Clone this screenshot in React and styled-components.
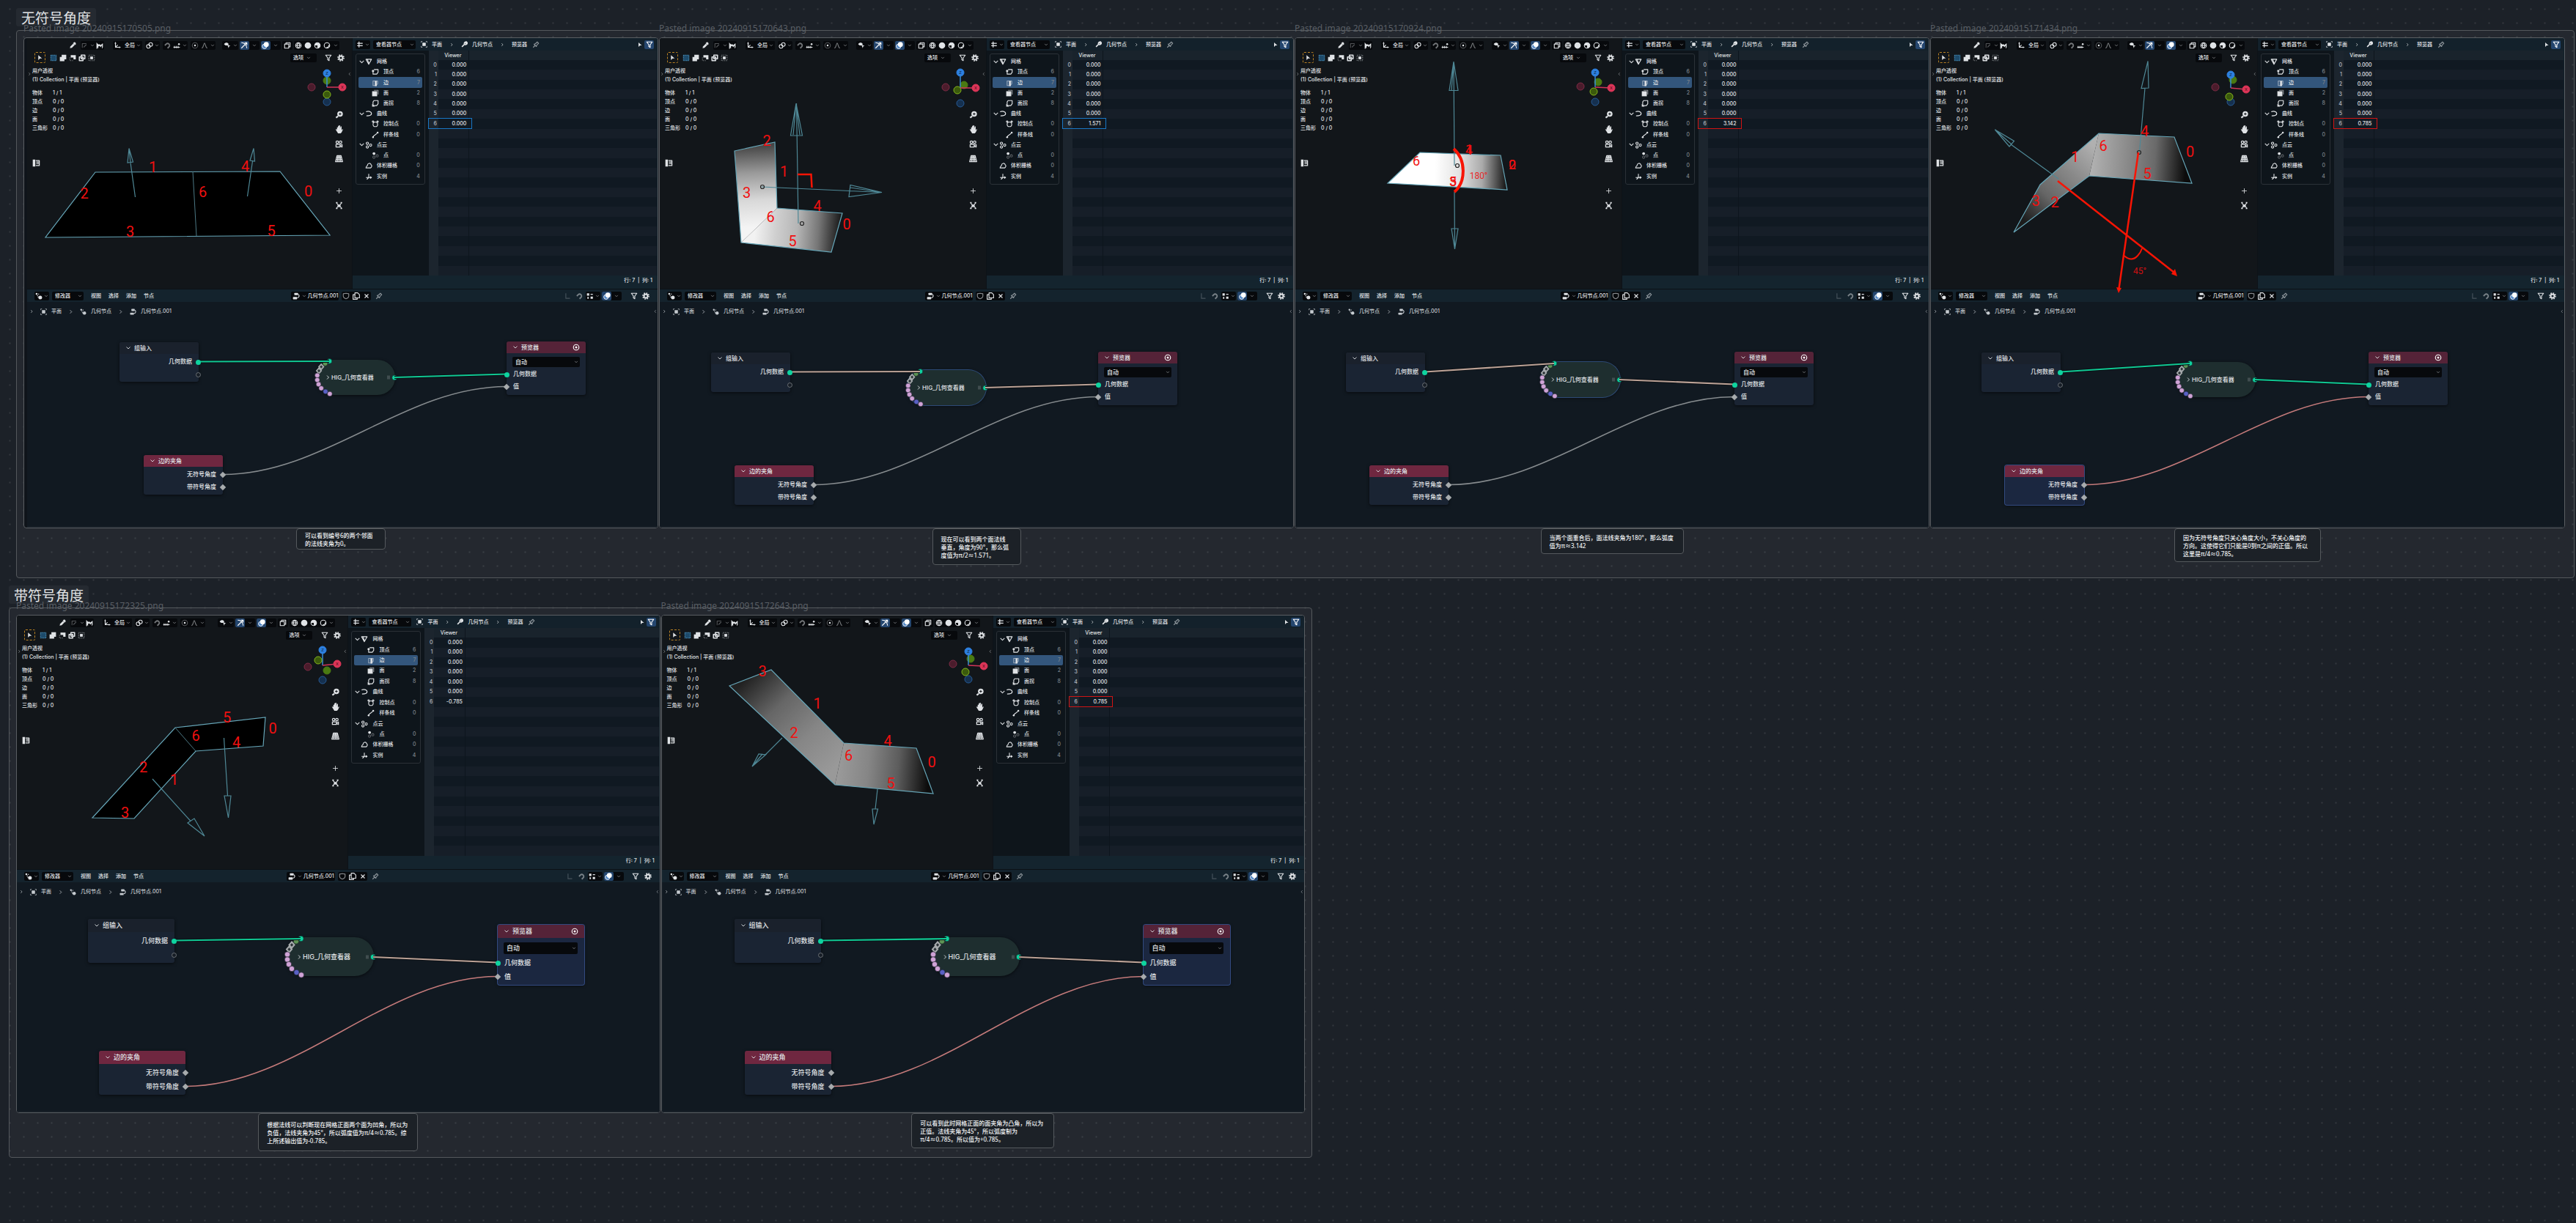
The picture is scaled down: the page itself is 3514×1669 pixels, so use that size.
import React from "react";
import styled, { createGlobalStyle, css } from "styled-components";

const GlobalStyle = createGlobalStyle`
  *, *::before, *::after { box-sizing: border-box; }
  html, body { margin: 0; background: #1c2128; }
  body {
    min-height: 100vh;
    color: #d5d8db;
    font-family: "Noto Sans", "Noto Sans CJK SC", sans-serif;
    background-image: radial-gradient(circle, #33383e 0, transparent 2px);
    background-size: 19px 19px;
    background-position: 4px 3px;
  }
  button, select { font: inherit; color: inherit; border: 0; margin: 0; padding: 0; background: none; }
  a { color: inherit; text-decoration: none; }
`;

const UI_FONT = `Inter, "Noto Sans CJK SC", sans-serif`;

/* ---------- icons ---------- */

const line = { fill: "none", stroke: "currentColor", strokeWidth: 1.8, strokeLinejoin: "round" };
const solid = { fill: "currentColor" };

const ICONS = {
  down: <path {...line} d="M3 5l5 5 5-5" />,
  right: <path {...line} d="M6 3l5 5-5 5" />,
  left: <path {...line} d="M10 3L5 8l5 5" />,
  dropper: <g><path {...solid} d="M2 14l1.500-4 6-6 3 3-6 6z" /><path {...solid} d="M9 3l2-2c2-1 5 1 4 4l-2 2z" /></g>,
  ghost: <path {...line} opacity=".35" d="M2 13V4h9M5 12l6-6" />,
  mode: <path {...solid} d="M1 15V1l2 3 3 2 2-1 2 2 5-4v9l-2 3V8l-3 4-2-3-3 1v5l-2-3v-2L3 15z" />,
  axes: <g><path {...line} d="M4 2v10h10M4 12l5-5" /><path {...solid} d="M2 4l2-4 2 4zM12 10l4 2-4 2z" /></g>,
  link: <g {...line}><circle cx="5.500" cy="10" r="4" /><circle cx="10.500" cy="6" r="4" /></g>,
  magnet: <path {...line} opacity=".5" strokeWidth="3" d="M3 8l3-3a4 4 0 016 6l-3 3" />,
  snap: <g><path {...line} d="M1 12h14M3 9v5M7 9v5M11 9v5" /><circle {...solid} cx="13" cy="5" r="2" /></g>,
  dot: <g><circle {...line} cx="8" cy="8" r="6" opacity=".35" /><circle {...solid} cx="8" cy="8" r="2" /></g>,
  peak: <path {...line} opacity=".5" d="M2 14C6 13 6 3 8 3s2 10 6 11" />,
  visible: <g><path {...solid} d="M1 5c3-4 8-4 10 0-2 4-7 4-10 0z" /><path {...solid} d="M8 6l7 3-3 1-1 4z" /></g>,
  gizmo: <g {...line}><path d="M2 2c7 0 11 5 12 12M2 14L14 2M9 2h5v5" /></g>,
  overlay: <g><circle cx="6" cy="10" r="5" fill="#4f86c6" stroke="currentColor" strokeWidth="1.500" /><circle {...solid} cx="10" cy="6" r="5.500" /></g>,
  xray: <g {...line}><rect x="2" y="5" width="9" height="9" /><path d="M5 5V2h9v9h-3" /></g>,
  wire: <g {...line}><circle cx="8" cy="8" r="6" /><path d="M2 8h12M8 2c-4 4-4 8 0 12M8 2c4 4 4 8 0 12" /></g>,
  ball: <circle {...solid} cx="8" cy="8" r="7" />,
  half: <g><circle {...line} cx="8" cy="8" r="6" /><path {...solid} d="M8 2a6 6 0 010 12V8H2a6 6 0 016-6z" /></g>,
  ring: <g><circle {...line} cx="8" cy="8" r="6" /><path {...line} d="M12 7a4 4 0 01-5 5" /></g>,
  filter: <path {...line} d="M2 2h12L9.500 8v6l-3-2V8z" />,
  gear: <g fill="none" stroke="currentColor"><circle cx="8" cy="8" r="4" strokeWidth="3" /><circle cx="8" cy="8" r="6.500" strokeWidth="2.500" strokeDasharray="2.600 2.500" /></g>,
  cursor: <path {...solid} d="M4 2l9 8H8l-4 4z" />,
  marquee: <rect x="2" y="2" width="12" height="12" fill="#1d4a6a" stroke="#58a8d8" strokeWidth="1.500" strokeDasharray="2 1.500" />,
  add: <path {...solid} d="M5 1h10v10h-4v4H1V6h4z" />,
  sub: <g><path {...solid} d="M4 2h11v9h-5V7H4z" /><path {...line} strokeDasharray="2 2" d="M2 7v7h7" opacity=".5" /></g>,
  xor: <path {...line} strokeWidth="2.500" d="M6 2h8v8H6zM2 6h8v8H2z" />,
  sect: <g><rect {...solid} x="5" y="5" width="6" height="6" /><path {...line} opacity=".6" strokeDasharray="2 2" d="M2 2h12v12H2z" /></g>,
  zoom: <g><circle {...solid} cx="10" cy="6.500" r="5.500" /><path {...line} strokeWidth="3" d="M6 11l-4 3" /><path stroke="#14181d" strokeWidth="1.500" d="M7.500 6.500h5M10 4v5" /></g>,
  hand: <path {...solid} d="M4 8V4h2v3V1h2v6-7h2v7l1-5h2v8l1-2h2l-3 6-2 2H6L1 8z" />,
  camera: <g><path {...line} d="M2 9h8v5H2zM10 11l4-2v5l-4-2" /><circle {...line} cx="4.500" cy="4.500" r="2.500" /><circle {...line} cx="11" cy="4.500" r="2.500" /></g>,
  floor: <path {...line} d="M4 2h8l3 12H1zM3 6h10M2 10h12M8 2v12M6 2L4.500 14M10 2l1.500 12" />,
  plus: <path {...line} strokeWidth="1.200" d="M8 3v10M3 8h10" />,
  frame: <g><rect {...solid} x="5" y="6" width="6" height="5" /><path {...line} d="M2 2l4 4M14 2l-4 4M2 14l4-4M14 14l-4-4M2 2h3M11 2h3M2 14h3M11 14h3" /></g>,
  panel: <g><path {...solid} d="M1 1h5v14H1z" /><path {...line} d="M7 3h7v10H7M8 6h5M8 9h5" /></g>,
  sheet: <path {...line} strokeWidth="2" d="M2 5h12M2 10h12M6 1v13" />,
  object: <g><rect {...solid} x="4" y="4" width="8" height="8" /><path {...line} strokeWidth="1.200" d="M1 4V1h3M12 1h3v3M15 12v3h-3M4 15H1v-3" /></g>,
  wrench: <path {...line} strokeWidth="3" d="M2 14l6-6M8 8c-1-4 2-6 5-6l-2 3 2 1 2-2c0 3-3 6-7 4" />,
  pin: <path {...line} opacity=".6" d="M2 14l4-4M4 7l5 5 1-3 4-4-3-3-4 4z" />,
  mesh: <path {...line} d="M2 3h12L8 14zM5 3l3 8" />,
  vertex: <g><path {...line} d="M5 3h9v6l-3 4H3V7" /><circle {...solid} cx="3" cy="6" r="2.500" /></g>,
  edge: <g><path {...line} opacity=".6" d="M3 4h10v6l-3 4H3z" /><path {...solid} d="M7 4h4v11H7z" /></g>,
  face: <g><path {...line} opacity=".6" d="M5 2h9v9" /><rect {...solid} x="1" y="4" width="11" height="11" /></g>,
  corner: <g><path {...line} d="M5 2h9v7l-3 4H3V5z" /><path {...solid} d="M1 9l6 6H1z" /></g>,
  curve: <path {...line} strokeWidth="2" d="M2 4c7-2 12 0 12 4s-5 5-11 5" />,
  control: <g {...line}><circle cx="8" cy="9" r="5" /><circle cx="3" cy="3" r="1.500" /><circle cx="13" cy="3" r="1.500" /></g>,
  spline: <g><path {...line} d="M3 13c1-5 6-4 9-9" /><circle {...solid} cx="3" cy="13" r="2" /><circle {...solid} cx="13" cy="3" r="2" /></g>,
  cloud: <g {...line}><circle cx="5" cy="4" r="2.500" /><circle cx="5" cy="12" r="2.500" /><circle cx="12" cy="8" r="2.500" /></g>,
  point: <g><circle {...solid} cx="5" cy="4" r="3" /><g {...line} opacity=".35"><circle cx="5" cy="12" r="2.500" /><circle cx="12" cy="9" r="2.500" /></g></g>,
  volume: <path {...line} d="M2 13c0-3 2-4 3-5 0-5 7-7 8-2 3 2 1 6-1 7z" />,
  instance: <path {...line} d="M8 2v8M2 10h12M8 10l-4 4M11 8l3 2-3 2" />,
  modifier: <g><circle {...solid} cx="3" cy="3" r="2" /><circle {...solid} cx="11" cy="11" r="4" /><path {...line} strokeDasharray="2 1.500" d="M3 3l7 1M3 3l4 8" /></g>,
  tree: <g><rect {...solid} x="4" y="1" width="8" height="5" rx="1" /><rect {...solid} x="1" y="10" width="9" height="5" rx="1" /><path {...line} d="M12 4c4 2 3 8-2 8" /></g>,
  shield: <path {...line} opacity=".6" d="M2 3l6-1 6 1v5c0 3-3 5-6 6-3-1-6-3-6-6z" />,
  copy: <g {...line}><path d="M5 1h6l4 4v7H5z" /><path d="M5 5H1v10h9v-3" /></g>,
  close: <path {...line} d="M4 4l8 8M12 4l-8 8" />,
  parent: <path {...line} opacity=".25" d="M3 2v11h9" />,
  grid: <path {...solid} d="M1 2h5v5H1zM9 3h5v2H9zM2 10h3v4H2zM9 9h5v5H9z" />,
  eye: <g {...line} stroke="#fff"><circle cx="8" cy="8" r="6" /><circle cx="8" cy="8" r="1.500" fill="#fff" /></g>,
  grip: <path {...line} opacity=".4" d="M6 3v10M10 3v10" />,
};

const Glyph = styled.svg`
  display: block;
  flex: none;
  width: ${(p) => p.$size}px;
  height: ${(p) => p.$size}px;
  opacity: ${(p) => (p.$dim ? 0.7 : 1)};
`;
const Icon = ({ name, size = 10, dim }) => (
  <Glyph viewBox="0 0 16 16" $size={size} $dim={dim} aria-hidden="true">{ICONS[name]}</Glyph>
);

/* ---------- board ---------- */

const Board = styled.main`padding-top: 11px;`;
const Heading = styled.h2`
  width: max-content;
  height: 25px;
  margin: ${(p) => p.$top}px 0 5px ${(p) => p.$left}px;
  padding: 0 7px;
  border-radius: 3px;
  background: #252a31;
  color: #e2e4e6;
  font-size: 19px;
  font-weight: 400;
  line-height: 25px;
  font-family: "Noto Sans CJK SC", sans-serif;
`;
const Group = styled.section`
  display: flex;
  gap: 1px;
  width: ${(p) => p.$width};
  margin-left: ${(p) => p.$left}px;
  padding: 9px ${(p) => p.$right}px 0 9px;
  border: 1px solid #54585c;
  border-radius: 4px;
  background: rgba(255, 255, 255, 0.035);
`;
const Column = styled.div`
  position: relative;
  flex: 1;
  min-width: 0;
  display: flex;
  flex-direction: column;
  align-items: center;
`;
const FileName = styled.div`
  position: absolute;
  top: -20px;
  left: 0;
  color: #5a5f65;
  font-size: 12px;
  line-height: 16px;
  white-space: nowrap;
`;
const NoteSlot = styled.div`height: ${(p) => (p.$big ? 60 : 67)}px;`;
const Note = styled.p`
  display: flex;
  align-items: center;
  width: ${(p) => p.$w}px;
  height: ${(p) => p.$h}px;
  margin: 0;
  padding: 0 11px;
  border: 1px solid #55595d;
  border-radius: 4px;
  background: #1c2127;
  color: #f0f2f4;
  font-size: 8px;
  font-weight: 500;
  line-height: 11px;
  white-space: pre;
`;

const Shot = styled.article`
  position: relative;
  align-self: stretch;
  display: flex;
  flex-direction: column;
  padding-left: ${(p) => (p.$inset ? 4 : 0)}px;
  overflow: hidden;
  border: 1px solid #5a5e62;
  border-radius: 4px;
  background: #0f141a;
  font-family: ${UI_FONT};
  font-size: 7px;
  font-weight: 500;
  line-height: 12px;
  color: #e0e3e6;
`;
const Split = styled.div`
  display: grid;
  grid-template-columns: 51.5% 1fr;
  height: ${(p) => (p.$big ? 346 : 342)}px;
`;

/* ---------- shared controls ---------- */

const Bar = styled.div`
  display: flex;
  align-items: center;
  flex: none;
  height: 17px;
  padding: 0 ${(p) => p.$end || 0}px 0 ${(p) => p.$start || 0}px;
`;
const Push = styled.span`margin-left: auto;`;
const Cluster = styled.div`
  display: flex;
  align-items: center;
  height: 12px;
  margin-left: ${(p) => p.$gap || 0}px;
  padding: 0 ${(p) => p.$pad || 0}px;
  border-radius: 2px;
  background: ${(p) => (p.$clear ? "none" : "#07090c")};
`;
const Tool = styled.button`
  display: grid;
  place-items: center;
  flex: none;
  width: ${(p) => p.$w || 12}px;
  height: 12px;
  border-radius: 2px;
  background: ${(p) => (p.$on ? "#24466f" : "none")};
  color: ${(p) => (p.$on ? "#fff" : "inherit")};
`;
const T = ({ icon, w, on, size, label }) => (
  <Tool type="button" $w={w} $on={on} aria-label={label || icon}>
    <Icon name={icon} size={size || (icon === "down" ? 6 : 10)} dim={icon === "down"} />
  </Tool>
);
const Picker = styled.label`
  display: grid;
  align-items: center;
  width: ${(p) => p.$w}px;
  height: ${(p) => p.$h || 12}px;
  padding: 0 2px 0 4px;
  border-radius: 2px;
  background: #07090c;
  > * { grid-area: 1 / 1; }
  > svg { justify-self: end; pointer-events: none; }
  select { appearance: none; width: 100%; height: 100%; outline: 0; }
`;
const Select = ({ value, w, h, label }) => (
  <Picker $w={w} $h={h}>
    <select aria-label={label} defaultValue={value}><option>{value}</option></select>
    <Icon name="down" size={6} dim />
  </Picker>
);
const Crumb = styled.a`
  display: flex;
  align-items: center;
  gap: 6px;
  white-space: nowrap;
`;
const Crumbs = styled.nav`
  display: flex;
  align-items: center;
  gap: ${(p) => p.$gap}px;
  padding-left: ${(p) => p.$start}px;
`;

/* ---------- 3D viewport ---------- */

const Viewport = styled.section`
  display: flex;
  flex-direction: column;
  min-width: 0;
  padding-top: 1px;
  background: #12161a;
`;
const SelectTool = styled(Tool)`
  width: 15px;
  height: 15px;
  margin-right: 4px;
  border: 1px dashed #b98122;
`;
const Body = styled.div`
  position: relative;
  display: flex;
  justify-content: space-between;
  flex: 1;
  padding: 4px 11px 0 7px;
`;
const Edge = styled.span`
  position: absolute;
  top: 11px;
  ${(p) => p.$side}: 0;
  opacity: 0.6;
`;
const Info = styled.div`white-space: nowrap;`;
const Stats = styled.dl`
  display: grid;
  grid-template-columns: 28px auto;
  margin: 6px 0 36px;
  dd { margin: 0; }
`;
const Rail = styled.div`
  display: flex;
  flex-direction: column;
  padding-top: 55px;
  button { height: 20px; }
  button:nth-child(5) { margin-top: 24px; }
`;

function ViewportPane() {
  return (
    <Viewport>
      <Bar $start={56} $end={17}>
        <T icon="dropper" label="吸管" />
        <Cluster $gap={5}><T icon="ghost" /><T icon="down" w={8} /><T icon="mode" /></Cluster>
        <Cluster $gap={12}><T icon="axes" /><Select value="全局" w={28} label="变换坐标系" /></Cluster>
        <Cluster $gap={4}><T icon="link" /><T icon="down" w={8} /></Cluster>
        <Cluster $gap={4}><T icon="magnet" /><T icon="snap" w={14} /><T icon="down" w={8} /></Cluster>
        <Cluster $gap={4}><T icon="dot" /><T icon="peak" w={14} /><T icon="down" w={8} /></Cluster>
        <Push />
        <Cluster><T icon="visible" w={14} /><T icon="down" w={8} /></Cluster>
        <Cluster $gap={2}><T icon="gizmo" on w={13} /><T icon="down" w={14} /></Cluster>
        <Cluster $gap={2}><T icon="overlay" on w={13} /><T icon="down" w={14} /></Cluster>
        <Cluster $gap={2}><T icon="xray" w={14} /></Cluster>
        <Cluster $gap={2}><T icon="wire" w={13} /><T icon="ball" w={13} /><T icon="half" w={13} /><T icon="ring" w={13} /><T icon="down" w={10} /></Cluster>
      </Bar>
      <Bar $start={10} $end={6}>
        <SelectTool type="button" aria-label="选择"><Icon name="cursor" size={9} /></SelectTool>
        {["marquee", "add", "sub", "xor", "sect"].map((n) => <T key={n} icon={n} w={13} />)}
        <Push />
        <Cluster $pad={4}>选项<T icon="down" w={14} /></Cluster>
        <Cluster $gap={8} $clear><T icon="filter" w={17} /><T icon="gear" w={17} /></Cluster>
      </Bar>
      <Body>
        <Edge $side="left"><Icon name="right" size={6} /></Edge>
        <Edge $side="right"><Icon name="left" size={6} /></Edge>
        <Info>
          <div>用户透视</div>
          <div>(1) Collection | 平面 (预览器)</div>
          <Stats>
            <dt>物体</dt><dd>1 / 1</dd>
            <dt>顶点</dt><dd>0 / 0</dd>
            <dt>边</dt><dd>0 / 0</dd>
            <dt>面</dt><dd>0 / 0</dd>
            <dt>三角形</dt><dd>0 / 0</dd>
          </Stats>
          <Icon name="panel" size={11} />
        </Info>
        <Rail>
          {["zoom", "hand", "camera", "floor", "plus", "frame"].map((n) => <T key={n} icon={n} size={11} />)}
        </Rail>
      </Body>
    </Viewport>
  );
}

/* ---------- spreadsheet ---------- */

const Sheet = styled.section`
  position: relative;
  display: flex;
  flex-direction: column;
  min-width: 0;
  background: #13212b;
  border-left: 1px solid #0d1217;
`;
const SheetBody = styled.div`
  display: grid;
  grid-template-columns: 104px minmax(0, 1fr);
  flex: 1;
  min-height: 0;
  padding-right: 1px;
`;
const TreePane = styled.div`
  padding: 4px 5px 0 4px;
  background: #0e151b;
`;
const Tree = styled.ul`
  display: grid;
  grid-auto-rows: 1fr;
  height: 59%;
  margin: 0;
  padding: 3px;
  list-style: none;
  border: 1px solid #2b3137;
  border-radius: 3px;
`;
const TreeRow = styled.button`
  display: flex;
  align-items: center;
  width: 100%;
  height: 100%;
  padding: 0 3px 0 ${(p) => (p.$level ? 18 : p.$leaf ? 9 : 0)}px;
  border-radius: 2px;
  text-align: left;
  background: ${(p) => (p.$on ? "#33567c" : "none")};
  line-height: 10px;
`;
const TreeName = styled.span`margin-left: 6px;`;
const TreeCount = styled.span`
  margin-left: auto;
  color: #7b8289;
`;
const TREE = [
  ["mesh", "网格", 0], ["vertex", "顶点", 1, "6"], ["edge", "边", 1, "7"], ["face", "面", 1, "2"], ["corner", "面拐", 1, "8"],
  ["curve", "曲线", 0], ["control", "控制点", 1, "0"], ["spline", "样条线", 1, "0"],
  ["cloud", "点云", 0], ["point", "点", 1, "0"],
  ["volume", "体积栅格", 0, "0"], ["instance", "实例", 0, "4"],
];

const TableWrap = styled.div`min-height: 0; height: 100%;`;
const Table = styled.table`
  width: 100%;
  height: 100%;
  table-layout: fixed;
  border-collapse: collapse;
  background: #101922;
  line-height: 10px;
  th, td { height: 13px; padding: 0; font-weight: 500; text-align: right; }
  thead tr { background: #19232c; }
  tbody tr:nth-child(even) { background: #161e28; }
  th:nth-child(1), td:nth-child(1) { width: 13px; padding-right: 2px; background: #1c252e; }
  th:nth-child(2), td:nth-child(2) { width: 42px; padding-right: 3px; border-right: 1px solid #0d151d; }
  thead th:nth-child(2) { padding-right: 10px; }
  td:first-child { position: relative; color: #b4bac0; }
`;
const Mark = styled.span`
  position: absolute;
  z-index: 1;
  top: -1px;
  left: -1px;
  width: 60px;
  height: 15px;
  border: 1px solid ${(p) => p.$color};
`;
const Status = styled.footer`
  flex: none;
  height: 18px;
  padding: 1px 7px 0 0;
  background: #14242e;
  text-align: right;
  white-space: pre;
`;

function SheetPane({ last, mark }) {
  const rows = Array.from({ length: 22 }, (_, i) => (i < 6 ? "0.000" : i === 6 ? last : ""));
  return (
    <Sheet>
      <Bar $start={4} $end={5}>
        <Cluster><T icon="sheet" w={13} /><T icon="down" w={7} /></Cluster>
        <Cluster $gap={4} $clear><Select value="查看器节点" w={58} label="数据集" /></Cluster>
        <Crumbs $gap={10} $start={7}>
          <Crumb href="#object"><Icon name="object" size={9} />平面</Crumb>
          <Icon name="right" size={6} />
          <Crumb href="#modifier"><Icon name="wrench" size={9} />几何节点</Crumb>
          <Icon name="right" size={6} />
          <Crumb href="#viewer">预览器</Crumb>
        </Crumbs>
        <Cluster $gap={6} $clear><T icon="pin" label="固定" /></Cluster>
        <Push />
        <Cluster $clear><T icon="cursor" size={8} label="仅选中项" /><T icon="filter" on w={13} label="筛选" /></Cluster>
      </Bar>
      <SheetBody>
        <TreePane>
          <Tree>
            {TREE.map(([icon, name, level, count]) => (
              <li key={name}>
                <TreeRow type="button" $level={level} $leaf={!level && count} $on={name === "边"}>
                  {!level && !count && <Icon name="down" size={9} />}
                  <Icon name={icon} size={10} />
                  <TreeName>{name}</TreeName>
                  {count && <TreeCount>{count}</TreeCount>}
                </TreeRow>
              </li>
            ))}
          </Tree>
        </TreePane>
        <TableWrap>
          <Table>
            <thead><tr><th /><th>Viewer</th><th /></tr></thead>
            <tbody>
              {rows.map((v, i) => (
                <tr key={i}>
                  <td>{v && i}{i === 6 && mark && <Mark $color={mark} />}</td>
                  <td>{v}</td>
                  <td />
                </tr>
              ))}
            </tbody>
          </Table>
        </TableWrap>
      </SheetBody>
      <Status>行: 7  |  列: 1</Status>
    </Sheet>
  );
}

/* ---------- node editor ---------- */

const EditorBar = styled(Bar)`
  height: 18px;
  background: #14232d;
  border-top: 1px solid #0c1116;
`;
const Menu = styled.button`margin-left: 10px;`;
const BarThird = styled.div`
  display: flex;
  align-items: center;
  flex: 1 1 ${(p) => p.$basis};
  justify-content: ${(p) => p.$align || "flex-start"};
`;
const Canvas = styled.section`
  position: relative;
  height: ${(p) => (p.$big ? 314 : 308)}px;
  background: #111921;
  border-bottom: 2px solid #182028;
`;
const CanvasCrumbs = styled.div`
  display: flex;
  align-items: center;
  justify-content: space-between;
  padding: 7px 0 0 3px;
  color: #c6cbd0;
`;
const Wires = styled.svg`
  position: absolute;
  inset: 0;
  width: 100%;
  height: 100%;
  fill: none;
`;

const Node = styled.div`
  position: absolute;
  left: ${(p) => p.$x}px;
  top: ${(p) => p.$y}px;
  width: ${(p) => (p.$big ? 118 : 108)}px;
  height: ${(p) => p.$h}px;
  border-radius: 3px;
  background: ${(p) => (p.$sel ? "#1b2740" : "#1a2433")};
  box-shadow: ${(p) => (p.$sel ? "0 0 0 1px #324a80, " : "")}0 1px 4px rgba(0, 0, 0, 0.6);
  font-size: ${(p) => (p.$big ? 9 : 8)}px;
`;
const NodeHead = styled.header`
  display: flex;
  align-items: center;
  gap: 4px;
  height: ${(p) => (p.$big ? 18 : 16)}px;
  margin-bottom: ${(p) => p.$after || 2}px;
  padding: 0 8px;
  border-radius: 3px 3px 0 0;
  background: ${(p) => p.$color};
  > svg:last-child:not(:first-child) { margin-left: auto; }
`;
const NodeRow = styled.div`
  position: relative;
  height: ${(p) => (p.$big ? 19 : 17)}px;
  padding: 0 9px;
  line-height: ${(p) => (p.$big ? 19 : 17)}px;
  text-align: ${(p) => (p.$in ? "left" : "right")};
`;
const Socket = styled.span`
  position: absolute;
  top: 50%;
  ${(p) => (p.$in ? "left" : "right")}: -3px;
  width: 7px;
  height: 7px;
  margin-top: -3px;
  border-radius: 50%;
  background: #0ed39f;
  ${(p) => p.$kind === "empty" && css`background: #161d26; border: 1px solid #6d7277;`}
  ${(p) => p.$kind === "field" && css`
    width: 6px; height: 6px; border-radius: 0; background: #a7abad; transform: rotate(45deg);
  `}
`;
const NodeField = styled.div`
  padding: 0 8px;
  margin-bottom: ${(p) => (p.$big ? 2 : 1)}px;
`;
const Capsule = styled.div`
  position: absolute;
  left: ${(p) => p.$x}px;
  top: ${(p) => p.$y}px;
  display: flex;
  align-items: center;
  gap: 1px;
  width: ${(p) => (p.$big ? 120 : 108)}px;
  height: ${(p) => (p.$big ? 53 : 48)}px;
  padding: 0 5px 0 ${(p) => (p.$big ? 14 : 12)}px;
  border-radius: 26px;
  background: #1e2e2f;
  box-shadow: ${(p) => (p.$sel ? "0 0 0 1px #2d4a76, " : "")}0 1px 4px rgba(0, 0, 0, 0.6);
  font-size: ${(p) => (p.$big ? 9 : 8)}px;
  > svg:last-of-type { margin-left: auto; }
`;
const Beads = styled.div`
  position: absolute;
  inset: 0;
  svg { width: 100%; height: 100%; overflow: visible; display: block; }
`;

const BEADS = [
  [20.5, 2, "#0ed39f"], [14, 5.5, "#5d9455"], [8, 10.5, "#a7abad"], [4.5, 16.5, "#a7abad"], [2, 23.5, "#cfa2d6"],
  [2, 30.5, "#cfa2d6"], [4, 37, "#cfa2d6"], [8, 43, "#cfa2d6"], [14.5, 48, "#5960c4"], [21, 51.5, "#cfa2d6"], [119, 27, "#0ed39f"],
];

function HubNode({ x, y, big, sel }) {
  return (
    <Capsule $x={x} $y={y} $big={big} $sel={sel}>
      <Icon name="right" size={8} />HIG_几何查看器<Icon name="grip" size={8} />
      <Beads>
        <svg viewBox="0 0 120 53" aria-hidden="true">
          {BEADS.map(([cx, cy, fill], i) =>
            i === 2 || i === 3
              ? <path key={i} d={`M${cx} ${cy - 4}l3.500 4-3.500 4-3.500-4z`} fill="#2a3236" stroke={fill} strokeWidth="2" />
              : <circle key={i} cx={cx} cy={cy} r="3.700" fill={fill} stroke="#10181f" strokeWidth=".6" />
          )}
        </svg>
      </Beads>
    </Capsule>
  );
}

const INK = { teal: "#10c893", tan: "#bca296", gray: "#868b8e", rose: "#c47a7a" };

function NodeEditor({ big, origin, nodes, wires, sel }) {
  const at = ([x, y]) => [x - origin[0], y - origin[1]];
  const [input, hub, viewer, angle] = [at(nodes.input), at(nodes.hub), at(nodes.viewer), at(nodes.angle)];
  const w = big ? 118 : 108;
  const geoOut = [input[0] + w, input[1] + (big ? 29.5 : 26.5)];
  const hubIn = [hub[0] + (big ? 20 : 18), hub[1] + 2];
  const hubOut = [hub[0] + (big ? 119 : 107), hub[1] + (big ? 27 : 24)];
  const geoIn = [viewer[0], viewer[1] + (big ? 51.5 : 44.5)];
  const valIn = [viewer[0], viewer[1] + (big ? 70.5 : 61.5)];
  const angOut = [angle[0] + w, angle[1] + (big ? 48.5 : 26.5)];
  const bend = (valIn[0] - angOut[0]) * 0.36;
  const straight = (a, b) => `M${a} L${b}`;
  const curve = `M${angOut} C${angOut[0] + bend} ${angOut[1]} ${valIn[0] - bend} ${valIn[1]} ${valIn}`;
  return (
    <>
      <EditorBar $start={10} $end={8}>
        <BarThird $basis="0">
          <Cluster><T icon="modifier" label="编辑器类型" /><T icon="down" w={8} /></Cluster>
          <Cluster $gap={4} $clear><Select value="修改器" w={43} label="节点树类型" /></Cluster>
          <Menu type="button">视图</Menu><Menu type="button">选择</Menu>
          <Menu type="button">添加</Menu><Menu type="button">节点</Menu>
        </BarThird>
        <Cluster $pad={1}><T icon="tree" label="浏览节点树" /><T icon="down" w={10} /><span>几何节点.001</span></Cluster>
        <Cluster $gap={4}><T icon="shield" /><T icon="copy" w={16} /><T icon="close" /></Cluster>
        <Cluster $gap={5} $clear><T icon="pin" /></Cluster>
        <BarThird $basis="16px" $align="flex-end">
          <T icon="parent" w={16} /><T icon="magnet" w={14} />
          <Cluster $gap={2}><T icon="grid" /><T icon="down" w={8} /></Cluster>
          <Cluster $gap={2}><T icon="overlay" on w={13} /><T icon="down" w={14} /></Cluster>
          <Cluster $gap={8} $clear><T icon="filter" w={17} /><T icon="gear" w={16} /></Cluster>
        </BarThird>
      </EditorBar>
      <Canvas $big={big}>
        <CanvasCrumbs>
          <Crumbs $gap={9} $start={0}>
            <Icon name="right" size={6} />
            <Crumb href="#object"><Icon name="object" size={9} />平面</Crumb>
            <Icon name="right" size={7} />
            <Crumb href="#modifier"><Icon name="modifier" size={9} />几何节点</Crumb>
            <Icon name="right" size={7} />
            <Crumb href="#tree"><Icon name="tree" size={9} />几何节点.001</Crumb>
          </Crumbs>
          <Icon name="left" size={6} dim />
        </CanvasCrumbs>
        <HubNode x={hub[0]} y={hub[1]} big={big} sel={sel === "hub"} />
        <Wires aria-hidden="true">
          {[[straight(geoOut, hubIn), wires[0]], [straight(hubOut, geoIn), wires[1]]].map(([d, ink]) => (
            <g key={d}>
              <path d={d} stroke="#0a0f14" strokeWidth="4" />
              <path d={d} stroke={INK[ink]} strokeWidth="2.200" />
            </g>
          ))}
          <path d={curve} stroke={INK[wires[2]]} strokeWidth="1.500" />
        </Wires>
        <Node $x={input[0]} $y={input[1]} $big={big} $h={big ? 60 : 54}>
          <NodeHead $big={big} $color="#1a212c"><Icon name="down" size={8} />组输入</NodeHead>
          <NodeRow $big={big}>几何数据<Socket /></NodeRow>
          <NodeRow $big={big}><Socket $kind="empty" /></NodeRow>
        </Node>
        <Node $x={viewer[0]} $y={viewer[1]} $big={big} $h={big ? 82 : 73} $sel={sel === "viewer"}>
          <NodeHead $big={big} $color="#552338" $after={big ? 6 : 5}>
            <Icon name="down" size={8} />预览器<Icon name="eye" size={10} />
          </NodeHead>
          <NodeField $big={big}><Select value="自动" w={big ? 101 : 92} h={big ? 16 : 14} label="域" /></NodeField>
          <NodeRow $big={big} $in>几何数据<Socket $in /></NodeRow>
          <NodeRow $big={big} $in>值<Socket $in $kind="field" /></NodeRow>
        </Node>
        <Node $x={angle[0]} $y={angle[1]} $big={big} $h={big ? 60 : 54} $sel={sel === "angle"}>
          <NodeHead $big={big} $color="#6f2740"><Icon name="down" size={8} />边的夹角</NodeHead>
          <NodeRow $big={big}>无符号角度<Socket $kind="field" /></NodeRow>
          <NodeRow $big={big}>带符号角度<Socket $kind="field" /></NodeRow>
        </Node>
      </Canvas>
    </>
  );
}

/* ---------- scene drawing ---------- */

const SceneSvg = styled.svg`
  position: absolute;
  top: 0;
  left: 0;
  pointer-events: none;
  text { font-family: Roboto, sans-serif; font-weight: 400; fill: #f01010; text-anchor: middle; }
`;

function Axis({ g }) {
  const ball = ([x, y], fill, stroke) => <circle cx={x} cy={y} r="5" fill={fill} stroke={stroke} />;
  return (
    <g>
      {ball(g.nz, "#15304f", "#265a94")}
      {ball(g.nx, "#4b1c2c", "#7d2c45")}
      {ball(g.y, "#4a7a12", "#4a7a12")}
      <path d={`M${g.c} L${g.z}`} stroke="#3a8ed0" strokeWidth="1.500" />
      <path d={`M${g.c} L${g.x}`} stroke="#d23558" strokeWidth="1.500" />
      {ball(g.ny, "#3b5a0c", "#84b61c")}
      {ball(g.z, "#2d80e0", "#2d80e0")}
      {ball(g.x, "#dc3558", "#dc3558")}
      <text x={g.z[0]} y={g.z[1] + 2} style={{ fill: "#12304f" }} fontSize="6">Z</text>
      <text x={g.x[0]} y={g.x[1] + 2} style={{ fill: "#54101f" }} fontSize="6">X</text>
    </g>
  );
}

function Scene({ id, origin, s }) {
  return (
    <SceneSvg width="450" height="400" viewBox={`${origin[0]} ${origin[1]} 450 400`} aria-hidden="true">
      <defs>
        {s.faces.map((f, i) => f.ramp && (
          <linearGradient key={i} id={`${id}-${i}`} gradientUnits="userSpaceOnUse" x1={f.ramp[0]} y1={f.ramp[1]} x2={f.ramp[2]} y2={f.ramp[3]}>
            {f.stops.map((c, k) => <stop key={k} offset={k / (f.stops.length - 1)} stopColor={c} />)}
          </linearGradient>
        ))}
      </defs>
      {s.faces.map((f, i) => <polygon key={i} points={f.pts} fill={f.ramp ? `url(#${id}-${i})` : "#000"} />)}
      <polygon points={s.outline} fill="none" stroke="#66a6b8" strokeWidth="1.200" />
      {s.seam && <path d={s.seam} stroke="#4c7884" />}
      {s.arrows.map((d) => <path key={d} d={d} fill="none" stroke="#4f8896" strokeWidth="1.200" />)}
      {s.pivots && s.pivots.map(([x, y]) => <circle key={x} cx={x} cy={y} r="2.500" fill="none" stroke="#222" strokeWidth="1.200" />)}
      {s.red && s.red.map(([d, w]) => <path key={d} d={d} fill="none" stroke="#f81404" strokeWidth={w} />)}
      {s.tips && s.tips.map((d) => <path key={d} d={d} fill="#f81404" />)}
      {s.nums.map(([n, x, y]) => <text key={n} x={x} y={y + 7} fontSize={s.size || 20}>{n}</text>)}
      {s.note && <text x={s.note[1]} y={s.note[2] + 4} fontSize={s.note[3]} opacity=".85">{s.note[0]}</text>}
      <Axis g={s.gizmo} />
    </SceneSvg>
  );
}

/* ---------- data ---------- */

const BLUE = "#1976c4";
const RED = "#d01414";

const UNSIGNED = [
  {
    file: "Pasted image 20240915170505.png", origin: [33, 52], inset: true, last: "0.000", mark: BLUE,
    nodes: { input: [163, 467], hub: [431, 491], viewer: [691, 466], angle: [196, 621] },
    wires: ["teal", "teal", "gray"],
    note: "可以看到编号6的两个邻面\n的法线夹角为0。", w: 122, h: 29,
    scene: {
      faces: [{ pts: "130,235 382,234 450,321 62,324" }],
      outline: "130,235 382,234 450,321 62,324", seam: "M263 234L268 322",
      arrows: ["M184.500 269L178 222M176 202.500L174 222L181.500 221Z M176 202.500L178 222", "M337.500 268L344.500 220M346 202.500L341 219L347.500 220Z"],
      nums: [[1, 208.5, 228], [4, 334.5, 227], [2, 115, 263.5], [6, 276.5, 262], [0, 420.5, 261], [3, 177.5, 316], [5, 370, 315]],
      gizmo: { z: [446, 100], x: [467, 119], c: [446, 119], y: [446, 110], ny: [446, 129], nx: [425, 119], nz: [446, 139] },
    },
  },
  {
    file: "Pasted image 20240915170643.png", origin: [900, 52], last: "1.571", mark: BLUE,
    nodes: { input: [970, 481], hub: [1237, 505], viewer: [1498, 480], angle: [1002, 635] },
    wires: ["tan", "tan", "gray"], sel: "hub",
    note: "现在可以看到两个面法线\n垂直，角度为90°，那么弧\n度值为π/2≈1.571。", w: 121, h: 50,
    scene: {
      faces: [
        { pts: "1002,206 1057,194 1060,284 1011,331", ramp: [1030, 198, 1036, 310], stops: ["#444", "#999", "#d8d8d8", "#f4f4f4"] },
        { pts: "1060,284 1149,291 1134,344 1011,331", ramp: [1030, 310, 1145, 318], stops: ["#f2f2f2", "#cfcfcf", "#b5b5b5", "#777", "#1c1c1c"] },
      ],
      outline: "1002,206 1057,194 1060,284 1149,291 1134,344 1011,331",
      arrows: ["M1089 305L1086.500 141M1086 141L1078.500 185H1094.500ZM1082 184L1086 141L1091 184", "M1039 255L1203 262.500L1160 252.500L1158 268.500L1203 262.500M1160 256L1203 262.500"],
      red: [["M1088 238H1106.500L1107.500 256", 2.5]],
      pivots: [[1094, 305], [1040, 255]],
      nums: [[2, 1046, 192], [1, 1069.5, 234], [3, 1018.5, 263], [4, 1115, 281], [6, 1051, 296], [0, 1155, 306], [5, 1081, 329]],
      gizmo: { z: [1310, 99], x: [1331, 120], c: [1310, 120], y: [1315, 116], ny: [1306, 123], nx: [1290, 119], nz: [1310, 141] },
    },
  },
  {
    file: "Pasted image 20240915170924.png", origin: [1767, 52], last: "3.142", mark: RED,
    nodes: { input: [1836, 481], hub: [2102, 494], viewer: [2366, 480], angle: [1868, 635] },
    wires: ["tan", "tan", "gray"], sel: "hub",
    note: "当两个面重合后，面法线夹角为180°，那么弧度\n值为π≈3.142", w: 195, h: 35,
    scene: {
      size: 18,
      faces: [{ pts: "1937,208 2047,212 2056,259 1893,250", ramp: [1893, 230, 2054, 234], stops: ["#fff", "#fff", "#fff", "#e4e4e4", "#aaa", "#1a1a1a"] }],
      outline: "1937,208 2047,212 2056,259 1893,250",
      arrows: ["M1984 226L1983 84M1983 84L1977 123.500H1989ZM1980 123L1983 84", "M1984 262L1984.500 340M1980 312H1989L1984.500 340Z"],
      red: [["M1983 203C2000 218 2000 248 1984 262", 4]],
      pivots: [[1988, 226]],
      nums: [[6, 1932, 219], [4, 2004, 204], [1, 2004, 203], [0, 2063, 224], [2, 2063, 224], [5, 1982, 247], [3, 1982, 247]],
      note: ["180°", 2017, 240, 12],
      gizmo: { z: [2176, 99], x: [2198, 120], c: [2176, 119], y: [2180, 112], ny: [2174, 125], nx: [2156, 118], nz: [2176, 139] },
    },
  },
  {
    file: "Pasted image 20240915171434.png", origin: [2634, 52], last: "0.785", mark: RED,
    nodes: { input: [2703, 481], hub: [2969, 494], viewer: [3231, 480], angle: [2735, 635] },
    wires: ["teal", "teal", "rose"], sel: "angle",
    note: "因为无符号角度只关心角度大小，不关心角度的\n方向。这使得它们只能是0到π之间的正值。所以\n这里是π/4≈0.785。", w: 200, h: 46,
    scene: {
      faces: [
        { pts: "2863,182 2966,187 2990,250 2850,240", ramp: [2855, 210, 2982, 218], stops: ["#b0b0b0", "#8e8e8e", "#6a6a6a", "#0c0c0c"] },
        { pts: "2863,182 2850,240 2747,317 2783,252", ramp: [2856, 200, 2760, 300], stops: ["#b0b0b0", "#8a8a8a", "#666", "#1c1c1c"] },
      ],
      outline: "2863,182 2966,187 2990,250 2850,240 2747,317 2783,252",
      arrows: ["M2918.500 207L2926 120M2930 83.500L2921 120.500L2931 120Z", "M2808 244L2743 197M2721.500 177L2741 200L2747.500 192.500ZM2721.500 177L2744 197"],
      pivots: [[2918, 208]],
      red: [["M2807 247L2966 372", 2.5], ["M2917 208L2890.500 394", 2.5], ["M2897.500 349Q2908 358 2916 349Q2920 345 2922 339", 2]],
      tips: ["M2970 377L2962 374L2967 367Z", "M2890 400L2887 392L2894 393Z"],
      nums: [[4, 2925.5, 179], [6, 2869, 199], [1, 2830.5, 214], [0, 2987.5, 207], [5, 2929, 237], [3, 2777, 274], [2, 2803, 276]],
      note: ["45°", 2919, 370, 12],
      gizmo: { z: [3043, 102], x: [3064, 122], c: [3043, 120], y: [3046, 109], ny: [3041, 132], nx: [3022, 119], nz: [3043, 139] },
    },
  },
];

const SIGNED = [
  {
    file: "Pasted image 20240915172325.png", origin: [23, 840], big: true, last: "-0.785",
    nodes: { input: [120, 1254], hub: [390, 1279], viewer: [679, 1262], angle: [135, 1434] },
    wires: ["teal", "tan", "rose"], sel: "viewer",
    note: "根据法线可以判断现在网格正面两个面为凹角，所以为\n负值，法线夹角为45°，所以弧度值为π/4≈0.785。综\n上所述输出值为-0.785。", w: 218, h: 52,
    scene: {
      faces: [{ pts: "239,993 362,979 359,1018 267,1025 183,1117 126,1116" }],
      outline: "239,993 362,979 359,1018 267,1025 183,1117 126,1116", seam: "M239 993L267 1025",
      arrows: ["M305.500 1007L310.500 1086M306 1086H315L311.500 1116Z", "M208 1063L260 1120.500M256 1123L265 1117L279 1141Z"],
      nums: [[5, 309.5, 979], [0, 372, 994], [6, 267, 1004], [4, 322.5, 1013], [2, 195.5, 1047], [1, 237.5, 1064], [3, 170.5, 1109]],
      gizmo: { z: [440, 887], x: [460, 906], c: [440, 908], y: [446, 915], ny: [434, 901], nx: [420, 910], nz: [440, 928] },
    },
  },
  {
    file: "Pasted image 20240915172643.png", origin: [902, 840], big: true, last: "0.785", mark: RED,
    nodes: { input: [1001, 1254], hub: [1270, 1279], viewer: [1559, 1262], angle: [1015, 1434] },
    wires: ["teal", "tan", "rose"], sel: "viewer",
    note: "可以看到此时网格正面的面夹角为凸角，所以为\n正值。法线夹角为45°，所以弧度制为\nπ/4≈0.785。所以值为+0.785。", w: 195, h: 48,
    scene: {
      faces: [
        { pts: "994,936 1051,914 1150,1014 1138,1071", ramp: [1022, 922, 1140, 1045], stops: ["#222", "#666", "#868686", "#999"] },
        { pts: "1150,1014 1249,1021 1272,1083 1138,1071", ramp: [1142, 1040, 1266, 1050], stops: ["#9a9a9a", "#868686", "#5c5c5c", "#0c0c0c"] },
      ],
      outline: "994,936 1051,914 1150,1014 1249,1021 1272,1083 1138,1071",
      arrows: ["M1066 1007L1040 1033M1025 1046L1034 1029L1043.500 1030ZM1025 1046L1039 1029", "M1196 1077L1193 1104M1189 1104H1196.500L1191 1125Z"],
      nums: [[3, 1039, 916], [1, 1114, 960], [2, 1082, 1000], [4, 1210, 1011], [6, 1156.5, 1031], [0, 1270, 1040], [5, 1214, 1069]],
      gizmo: { z: [1320, 889], x: [1341, 909], c: [1320, 908], y: [1323, 899], ny: [1316, 917], nx: [1299, 906], nz: [1320, 927] },
    },
  },
];

function Card({ d, id }) {
  const canvasOrigin = [d.origin[0] + (d.inset ? 4 : 0), d.origin[1] + (d.big ? 364 : 360)];
  return (
    <Column>
      <FileName>{d.file}</FileName>
      <Shot $inset={d.inset}>
        <Split $big={d.big}>
          <ViewportPane />
          <SheetPane last={d.last} mark={d.mark} />
        </Split>
        <NodeEditor big={d.big} origin={canvasOrigin} nodes={d.nodes} wires={d.wires} sel={d.sel} />
        <Scene id={id} origin={d.origin} s={d.scene} />
      </Shot>
      <NoteSlot $big={d.big}>
        <Note $w={d.w} $h={d.h}>{d.note}</Note>
      </NoteSlot>
    </Column>
  );
}

export default function App() {
  return (
    <>
      <GlobalStyle />
      <Board>
        <Heading $top={0} $left={22}>无符号角度</Heading>
        <Group $left={22} $right={12} $width="calc(100% - 24px)">
          {UNSIGNED.map((d, i) => <Card key={d.file} d={d} id={`u${i}`} />)}
        </Group>
        <Heading $top={10} $left={12}>带符号角度</Heading>
        <Group $left={12} $right={9} $width="50.6%">
          {SIGNED.map((d, i) => <Card key={d.file} d={d} id={`s${i}`} />)}
        </Group>
      </Board>
    </>
  );
}
